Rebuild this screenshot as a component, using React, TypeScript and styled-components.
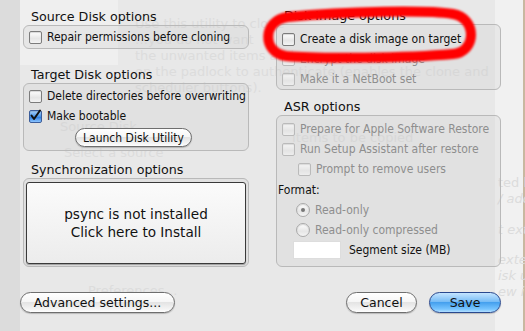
import React from "react";
import styled, { createGlobalStyle, css } from "styled-components";

const Global = createGlobalStyle`
  html, body { margin: 0; padding: 0; }
  body { width: 525px; height: 331px; overflow: hidden; font-family: "DejaVu Sans", "Liberation Sans", sans-serif; }
`;

const Page = styled.div`
  position: relative;
  width: 525px;
  height: 331px;
  overflow: hidden;
  background: #e8e8e8;
`;

const Backdrop = styled.div`
  position: absolute;
  inset: 0;
  pointer-events: none;
`;

const Strip = styled.div<{ $x: number; $y: number; $w: number; $h: number; $bg: string }>`
  position: absolute;
  left: ${(p) => p.$x}px;
  top: ${(p) => p.$y}px;
  width: ${(p) => p.$w}px;
  height: ${(p) => p.$h}px;
  background: ${(p) => p.$bg};
`;

const GhostText = styled.div<{ $x: number; $y: number; $italic?: boolean }>`
  position: absolute;
  left: ${(p) => p.$x}px;
  top: ${(p) => p.$y}px;
  font-size: 13px;
  line-height: 16px;
  color: #dcdcdc;
  white-space: nowrap;
  font-style: ${(p) => (p.$italic ? "italic" : "normal")};
`;

const Sheet = styled.div`
  position: relative;
  display: flex;
  flex-direction: column;
  padding: 0 24px 0 23px;
  height: 331px;
  box-sizing: border-box;
`;

const Columns = styled.div`
  display: grid;
  grid-template-columns: 226px 225px;
  column-gap: 27px;
`;

const Column = styled.div`
  display: flex;
  flex-direction: column;
`;

const GroupLabel = styled.div<{ $top: number }>`
  margin-top: ${(p) => p.$top}px;
  padding-left: 8px;
  height: 16px;
  font-size: 12.7px;
  line-height: 16px;
  color: #111;
  white-space: nowrap;
`;

const Box = styled.div<{ $h: number }>`
  box-sizing: border-box;
  height: ${(p) => p.$h}px;
  border: 1px solid #b9b9b9;
  border-radius: 6px;
  background: rgba(200, 200, 200, 0.22);
  display: flex;
  flex-direction: column;
  padding: 2px 5px 0 5px;
`;

const condensed = css`
  font-family: "DejaVu Sans Condensed", "DejaVu Sans", sans-serif;
  font-stretch: condensed;
  font-size: 12px;
`;

const Row = styled.label<{ $indent?: number; $disabled?: boolean }>`
  display: flex;
  align-items: center;
  gap: 5px;
  height: 20px;
  padding-left: ${(p) => p.$indent ?? 0}px;
  ${condensed};
  color: ${(p) => (p.$disabled ? "#8e8e8e" : "#111")};
  white-space: nowrap;
`;

const boxBase = css`
  box-sizing: border-box;
  width: 13px;
  height: 13px;
  flex: none;
  border: 1px solid #7c7c7c;
  background: linear-gradient(#ffffff, #e6e6e6 60%, #f4f4f4);
  box-shadow: inset 0 1px 1px rgba(0, 0, 0, 0.15);
`;

const Check = styled.span<{ $disabled?: boolean }>`
  ${boxBase};
  border-radius: 2px;
  ${(p) => p.$disabled && css`border-color: #aaa; opacity: 0.7;`}
`;

const CheckOn = styled.span`
  ${boxBase};
  position: relative;
  border-radius: 2px;
  border-color: #3b5d9a;
  background: linear-gradient(#a9d3ff, #4a95e8 50%, #2c7ce0 55%, #8cc4ff);
`;

const Radio = styled.span<{ $on?: boolean }>`
  ${boxBase};
  width: 14px;
  height: 14px;
  border-radius: 50%;
  border-color: #aaa;
  display: flex;
  align-items: center;
  justify-content: center;
  &::after {
    content: "";
    width: 4px;
    height: 4px;
    border-radius: 50%;
    background: ${(p) => (p.$on ? "#777" : "transparent")};
  }
`;

const PlainLabel = styled.div`
  ${condensed};
  color: #111;
  height: 20px;
  line-height: 20px;
  margin-top: 1px;
`;

const Field = styled.div`
  width: 48px;
  height: 18px;
  background: #fff;
  border: 1px solid #ddd;
  box-sizing: border-box;
  flex: none;
`;

const FieldRow = styled.div`
  display: flex;
  align-items: center;
  gap: 8px;
  padding-left: 15px;
  margin-top: 1px;
  ${condensed};
  color: #111;
`;

const PillButton = styled.button<{ $w: number; $primary?: boolean }>`
  box-sizing: border-box;
  width: ${(p) => p.$w}px;
  height: 21px;
  border-radius: 11px;
  font-family: inherit;
  font-size: 12.5px;
  color: #111;
  padding: 0;
  border: 1px solid ${(p) => (p.$primary ? "#29488e" : "#6e6e6e")};
  background: ${(p) =>
    p.$primary
      ? "linear-gradient(#c4e4ff 0%, #78bdf6 45%, #45a0ee 50%, #78c5ff 85%, #b2deff 100%)"
      : "linear-gradient(#ffffff 0%, #f6f6f6 45%, #e4e4e4 50%, #f4f4f4 85%, #ffffff 100%)"};
  box-shadow: 0 1px 1px rgba(0, 0, 0, 0.2);
`;

const SmallButtonWrap = styled.div`
  display: flex;
  justify-content: center;
  margin-top: 2px;
  padding-right: 5px;
`;

const SmallPill = styled(PillButton)`
  height: 19px;
  ${condensed};
`;

const BigButton = styled.button`
  box-sizing: border-box;
  margin: 3px 2px 2px 2px;
  flex: 1;
  border: 1px solid #3a3a3a;
  border-radius: 3px;
  background: linear-gradient(#fbfbfb, #ececec);
  font-family: inherit;
  font-size: 13.6px;
  line-height: 18px;
  color: #111;
  box-shadow: 0 1px 1px rgba(0, 0, 0, 0.3);
`;

const SyncBox = styled(Box)`
  padding: 0;
`;

const Footer = styled.div`
  display: flex;
  align-items: center;
  margin-top: 25px;
  margin-left: -3px;
`;

const Spacer = styled.div`
  flex: 1;
`;

const FooterGap = styled.div`
  width: 12px;
`;

const Highlight = styled.svg`
  position: absolute;
  left: 258px;
  top: 5px;
  pointer-events: none;
`;

export default function App() {
  return (
    <Page>
      <Global />
      <Backdrop>
        <Strip $x={0} $y={0} $w={20} $h={331} $bg="#dcdcdc" />
        <Strip $x={20} $y={0} $w={98} $h={65} $bg="#efefef" />
        <Strip $x={495} $y={0} $w={30} $h={331} $bg="#f1f1f1" />
        <Strip $x={523} $y={0} $w={2} $h={331} $bg="#c8b8a0" />
        <GhostText $x={135} $y={16}>Use this utility to clone</GhostText>
        <GhostText $x={135} $y={32}>…you do not want</GhostText>
        <GhostText $x={135} $y={48}>the unwanted items and</GhostText>
        <GhostText $x={135} $y={64}>on the padlock to authenticate (enables the clone and</GhostText>
        <GhostText $x={135} $y={80}>scheduler buttons).</GhostText>
        <GhostText $x={60} $y={119}>Source Disk</GhostText>
        <GhostText $x={64} $y={145}>Select a source</GhostText>
        <GhostText $x={88} $y={283}>Preferences…</GhostText>
        <GhostText $x={292} $y={130}>Items to be copied</GhostText>
        <GhostText $x={498} $y={175}>ted b</GhostText>
        <GhostText $x={498} $y={191} $italic>/ add</GhostText>
        <GhostText $x={498} $y={222} $italic>t ext</GhostText>
        <GhostText $x={498} $y={252} $italic>exte</GhostText>
        <GhostText $x={498} $y={268} $italic>isk u</GhostText>
        <GhostText $x={498} $y={284} $italic>ew i</GhostText>
      </Backdrop>
      <Sheet>
        <Columns>
          <Column>
            <GroupLabel $top={9}>Source Disk options</GroupLabel>
            <Box $h={24}>
              <Row style={{ marginTop: -1 }}>
                <Check />
                Repair permissions before cloning
              </Row>
            </Box>
            <GroupLabel $top={18}>Target Disk options</GroupLabel>
            <Box $h={68}>
              <Row>
                <Check />
                Delete directories before overwriting
              </Row>
              <Row>
                <CheckOn>
                  <svg width="13" height="13" viewBox="0 0 13 13" style={{ position: "absolute", left: -1, top: -2 }}>
                    <path d="M2.5 6.5 L5 10 L11 1.5" fill="none" stroke="#111" strokeWidth="2" strokeLinecap="round" strokeLinejoin="round" />
                  </svg>
                </CheckOn>
                Make bootable
              </Row>
              <SmallButtonWrap>
                <SmallPill $w={117}>Launch Disk Utility</SmallPill>
              </SmallButtonWrap>
            </Box>
            <GroupLabel $top={11}>Synchronization options</GroupLabel>
            <SyncBox $h={89}>
              <BigButton>
                psync is not installed
                <br />
                Click here to Install
              </BigButton>
            </SyncBox>
          </Column>
          <Column>
            <GroupLabel $top={8}>Disk Image options</GroupLabel>
            <Box $h={66}>
              <Row style={{ marginTop: 2 }}>
                <Check />
                Create a disk image on target
              </Row>
              <Row $disabled>
                <Check $disabled />
                Encrypt the disk image
              </Row>
              <Row $disabled>
                <Check $disabled />
                Make it a NetBoot set
              </Row>
            </Box>
            <GroupLabel $top={9}>ASR options</GroupLabel>
            <Box $h={152} style={{ paddingLeft: 1 }}>
              <Row $disabled $indent={4} style={{ marginTop: 1 }}>
                <Check $disabled />
                Prepare for Apple Software Restore
              </Row>
              <Row $disabled $indent={4}>
                <Check $disabled />
                Run Setup Assistant after restore
              </Row>
              <Row $disabled $indent={20}>
                <Check $disabled />
                Prompt to remove users
              </Row>
              <PlainLabel>Format:</PlainLabel>
              <Row $disabled $indent={18}>
                <Radio $on />
                Read-only
              </Row>
              <Row $disabled $indent={18}>
                <Radio />
                Read-only compressed
              </Row>
              <FieldRow>
                <Field />
                Segment size (MB)
              </FieldRow>
            </Box>
          </Column>
        </Columns>
        <Footer>
          <PillButton $w={155}>Advanced settings...</PillButton>
          <Spacer />
          <PillButton $w={71}>Cancel</PillButton>
          <FooterGap />
          <PillButton $w={72} $primary>Save</PillButton>
        </Footer>
      </Sheet>
      <Highlight width="225" height="62" viewBox="0 0 225 62">
        <defs>
          <filter id="soft" x="-10%" y="-30%" width="120%" height="160%">
            <feGaussianBlur stdDeviation="1.3" />
          </filter>
        </defs>
        <path
          d="M30 12 C 90 6, 170 5, 195 9 C 219 13, 219 47, 195 49 C 150 53, 60 54, 28 51 C 4 48, 4 15, 30 12 Z"
          fill="none"
          stroke="#ff0000"
          strokeWidth="10"
          filter="url(#soft)"
        />
      </Highlight>
    </Page>
  );
}
